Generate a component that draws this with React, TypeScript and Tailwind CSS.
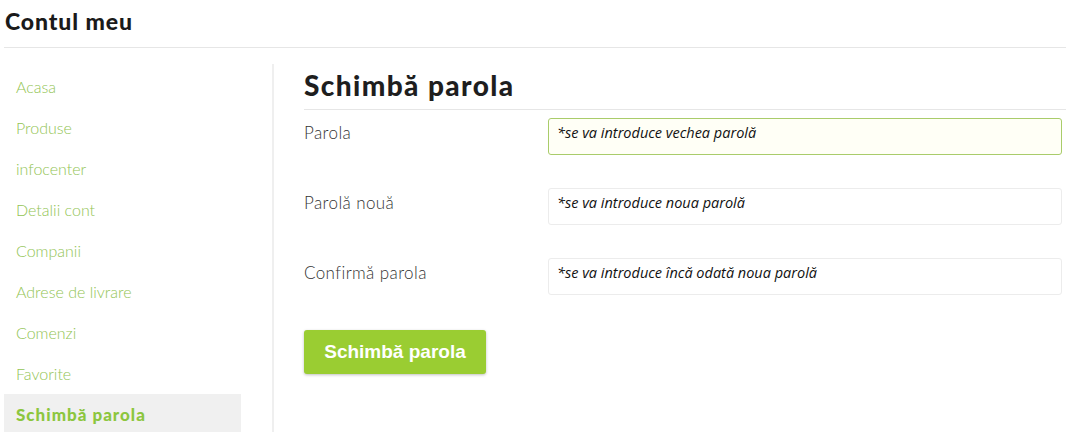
import { useState } from "react";

const menu = [
  "Acasa",
  "Produse",
  "infocenter",
  "Detalii cont",
  "Companii",
  "Adrese de livrare",
  "Comenzi",
  "Favorite",
  "Schimbă parola",
];

const fields = [
  { label: "Parola", placeholder: "*se va introduce vechea parolă" },
  { label: "Parolă nouă", placeholder: "*se va introduce noua parolă" },
  { label: "Confirmă parola", placeholder: "*se va introduce încă odată noua parolă" },
];

export default function App() {
  const [focused, setFocused] = useState(0);

  return (
    <div className="h-[432px] overflow-hidden bg-white pl-[4px] font-['Lato',sans-serif] text-[#222]">
      <div className="w-[1062px]">
        <h1 className="pt-[7px] pl-[1px] text-[23px] font-black leading-[28px] tracking-[0.9px] text-[#1a1a1a]">Contul meu</h1>
        <div className="mt-[12px] h-px bg-[#e6e6e6]" />

        <div className="mt-[16px] flex">
          <nav className="w-[270px] border-r-2 border-[#efefef] pt-[2px] pr-[31px]">
            {menu.map((item, i) => {
              const active = i === menu.length - 1;
              return (
                <div
                  key={item}
                  className={
                    active
                      ? "flex h-[41px] items-center bg-[#f0f0f0] px-[12px] text-[17px] font-black tracking-[1px] text-[#8cc63e]"
                      : "flex h-[41px] items-center px-[12px] text-[16px] font-light text-[#92c454]"
                  }
                >
                  {item}
                </div>
              );
            })}
          </nav>

          <main className="flex-1 pl-[30px]">
            <h2 className="pt-[5px] text-[28px] font-black leading-[32px] tracking-[1.4px] text-[#1e1e1e]">Schimbă parola</h2>
            <div className="mt-[8px] h-px bg-[#e6e6e6]" />

            <div className="mt-[8px] flex flex-col gap-[33px]">
              {fields.map((f, i) => (
                <div key={f.label} className="flex">
                  <label className="w-[244px] pt-[2px] text-[17px] font-light tracking-[0.4px] text-[#333]">{f.label}</label>
                  <input
                    type="password"
                    placeholder={f.placeholder}
                    onFocus={() => setFocused(i)}
                    className={
                      focused === i
                        ? "h-[37px] w-[514px] rounded-[3px] border border-[#a9cc6a] bg-[#fffff6] px-[8px] pb-[8px] text-[14.5px] font-normal italic outline-none placeholder:text-[#111] font-['Open_Sans',sans-serif]"
                        : "h-[37px] w-[514px] rounded-[3px] border border-[#ececec] bg-white px-[8px] pb-[8px] text-[14.5px] font-normal italic outline-none placeholder:text-[#111] font-['Open_Sans',sans-serif]"
                    }
                  />
                </div>
              ))}
            </div>

            <button className="mt-[35px] h-[44px] w-[182px] rounded-[3px] bg-[#9acd32] font-['Liberation_Sans',sans-serif] text-[19px] font-bold text-white shadow-[0_1px_3px_rgba(0,0,0,0.25)]">
              Schimbă parola
            </button>
          </main>
        </div>
      </div>
    </div>
  );
}
